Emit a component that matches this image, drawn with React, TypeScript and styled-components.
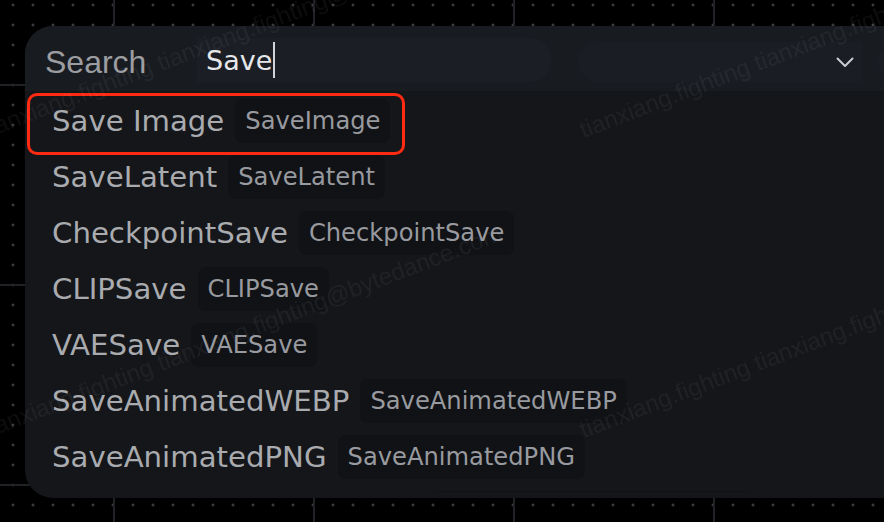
import React from "react";
import styled, { createGlobalStyle, css } from "styled-components";

const Global = createGlobalStyle`
  html, body { margin: 0; padding: 0; height: 100%; overflow: hidden; }
  body {
    background-color: #000;
    background-image:
      linear-gradient(to right, transparent 113px, #202226 113px, #202226 115px, transparent 115px),
      linear-gradient(to bottom, transparent 84px, #202226 84px, #202226 86px, transparent 86px),
      radial-gradient(circle at 13px 5px, #3a3b3d 0, #3a3b3d 1.1px, transparent 1.8px);
    background-size: 200px 100%, 100% 200px, 20px 20px;
  }
  #root { height: 100%; }
`;

const Panel = styled.div`
  margin: 26px 0 0 25px;
  width: 900px;
  height: 472px;
  border-radius: 28px;
  background: #14161a;
  overflow: hidden;
  display: flex;
  flex-direction: column;
`;

const Header = styled.div`
  flex: none;
  display: flex;
  align-items: center;
  height: 65px;
  box-sizing: border-box;
  padding: 3px 0 0 20px;
  background: #181b20;
`;

const SearchLabel = styled.span`
  flex: none;
  width: 152px;
  padding-top: 5px;
  font-family: "Liberation Sans", Arial, sans-serif;
  font-size: 32px;
  color: #9c9da0;
`;

const SearchField = styled.div`
  flex: none;
  display: flex;
  align-items: center;
  width: 355px;
  height: 44px;
  box-sizing: border-box;
  padding-left: 9px;
  background: #1b1e24;
  border-radius: 0 22px 22px 0;
  font-family: "DejaVu Sans", Verdana, sans-serif;
  font-size: 27px;
  color: #e6e7ea;
`;

const Caret = styled.span`
  width: 2px;
  height: 36px;
  margin-left: 1px;
  background: #d0d3d7;
`;

const Select = styled.div`
  flex: none;
  display: flex;
  align-items: center;
  justify-content: flex-end;
  width: 284px;
  height: 40px;
  margin: 4px 0 0 26px;
  padding-right: 8px;
  box-sizing: border-box;
  background: #1a1d23;
  border-radius: 20px 0 0 20px;
`;

const Pill = styled.div`
  flex: none;
  width: 60px;
  height: 40px;
  margin: 4px 0 0 16px;
  background: #1a1d23;
  border-radius: 20px;
`;

const List = styled.div`
  flex: none;
  height: 401px;
  overflow: hidden;
  box-sizing: border-box;
  padding: 2px 0 0 2px;
`;

const Row = styled.div<{ $active?: boolean }>`
  position: relative;
  display: flex;
  align-items: center;
  gap: 11px;
  width: fit-content;
  height: 56px;
  padding: 0 15px 0 25px;
  box-sizing: border-box;
  ${(p) =>
    p.$active &&
    css`
      &::after {
        content: "";
        position: absolute;
        left: 0;
        right: 0;
        top: 0;
        bottom: -6px;
        border: 3px solid #ff2a12;
        border-radius: 10px;
        pointer-events: none;
      }
    `}
`;

const Name = styled.span`
  font-family: "DejaVu Sans", Verdana, sans-serif;
  font-size: 29.2px;
  color: #a9abaf;
  white-space: nowrap;
`;

const Tag = styled.span`
  display: inline-flex;
  align-items: center;
  height: 44px;
  padding: 0 10px;
  border-radius: 8px;
  background: #101216;
  font-family: "DejaVu Sans", Verdana, sans-serif;
  font-size: 24.2px;
  color: #989a9f;
  white-space: nowrap;
`;

const WatermarkLayer = styled.div`
  position: fixed;
  inset: 0;
  pointer-events: none;
  overflow: hidden;
  z-index: 10;
`;

const WatermarkText = styled.span<{ $x: number; $y: number }>`
  position: absolute;
  left: ${(p) => p.$x}px;
  top: ${(p) => p.$y - 22}px;
  font-family: "Liberation Sans", Arial, sans-serif;
  font-size: 24px;
  line-height: 24px;
  white-space: nowrap;
  color: rgba(255, 255, 255, 0.05);
  transform: rotate(-21deg);
  transform-origin: 0 100%;
`;

const Chevron = () => (
  <svg width="18" height="11" viewBox="0 0 18 11" fill="none">
    <path d="M1.5 1.5 L9 9 L16.5 1.5" stroke="#c9ccd1" strokeWidth="2" strokeLinecap="round" strokeLinejoin="round" />
  </svg>
);

const items: [string, string][] = [
  ["Save Image", "SaveImage"],
  ["SaveLatent", "SaveLatent"],
  ["CheckpointSave", "CheckpointSave"],
  ["CLIPSave", "CLIPSave"],
  ["VAESave", "VAESave"],
  ["SaveAnimatedWEBP", "SaveAnimatedWEBP"],
  ["SaveAnimatedPNG", "SaveAnimatedPNG"],
  ["SaveImageWithMetadata", "SaveImageWithMetadata"],
];

const marks = [
  { x: -12, y: 140 },
  { x: 585, y: 140 },
  { x: -12, y: 440 },
  { x: 585, y: 440 },
];

export default function App() {
  return (
    <>
      <Global />
      <Panel>
        <Header>
          <SearchLabel>Search</SearchLabel>
          <SearchField>
            Save
            <Caret />
          </SearchField>
          <Select>
            <Chevron />
          </Select>
          <Pill />
        </Header>
        <List>
          {items.map(([name, tag], i) => (
            <Row key={name} $active={i === 0}>
              <Name>{name}</Name>
              <Tag>{tag}</Tag>
            </Row>
          ))}
        </List>
      </Panel>
      <WatermarkLayer>
        {marks.map((m) => (
          <WatermarkText key={`${m.x}-${m.y}`} $x={m.x} $y={m.y}>
            tianxiang.fighting tianxiang.fighting@bytedance.com
          </WatermarkText>
        ))}
      </WatermarkLayer>
    </>
  );
}
